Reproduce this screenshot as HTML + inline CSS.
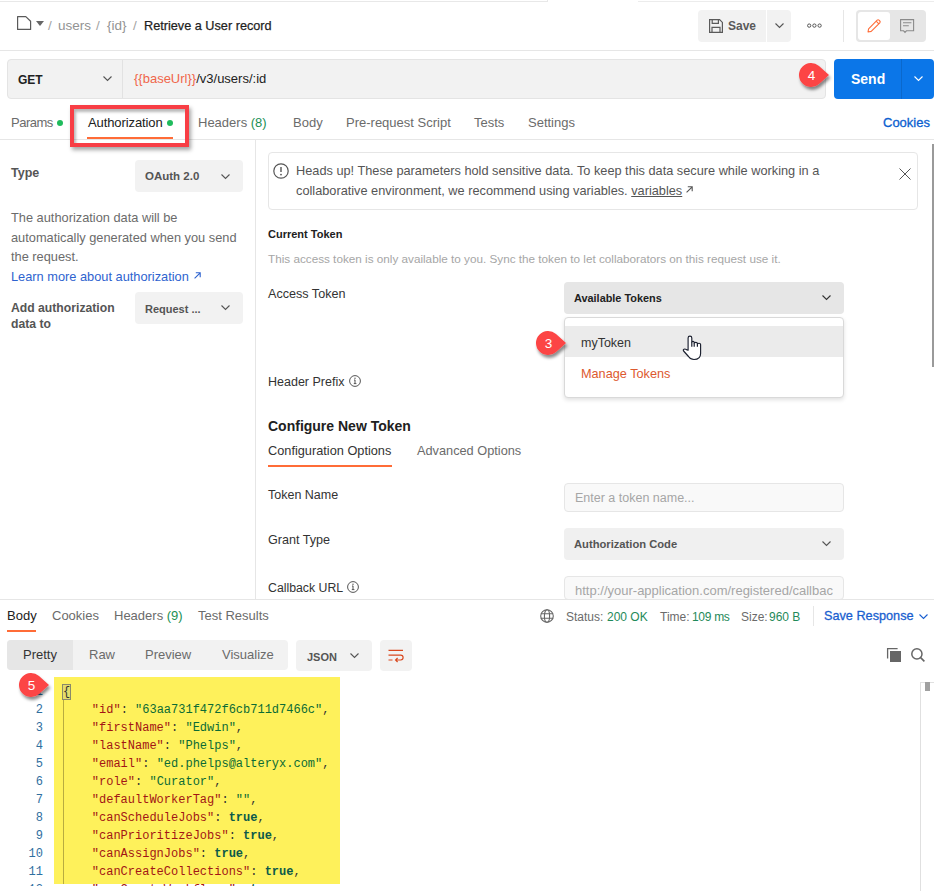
<!DOCTYPE html>
<html><head><meta charset="utf-8">
<style>
*{box-sizing:border-box;margin:0;padding:0}
html,body{width:934px;height:891px;overflow:hidden;background:#fff}
body{font-family:"Liberation Sans",sans-serif;font-size:13px;color:#212121;position:relative}
.a{position:absolute;white-space:nowrap;line-height:16px}
.b{position:absolute}
.sel{position:absolute;background:#f2f2f2;border-radius:4px}
.mono{font-family:"Liberation Mono",monospace}
svg{position:absolute;overflow:visible}
.tab{color:#6b6b6b}
.lbl{color:#212121}
.code{position:absolute;left:0;font-family:"Liberation Mono",monospace;font-size:12px;line-height:18px;white-space:pre}
.ln{color:#2f6f9f;position:absolute;width:43px;text-align:right}
.k{color:#a31515}
.s{color:#0b6b35}
.t{color:#0c5a4a;font-weight:bold}
.p{color:#333}
</style></head><body>

<!-- top tab lines -->
<div class="b" style="left:0;top:1px;width:548px;height:1px;background:#e8e8e8"></div>
<div class="b" style="left:547px;top:0;width:1px;height:2px;background:#e8e8e8"></div>
<div class="b" style="left:638px;top:1px;width:296px;height:1px;background:#ececec"></div>

<!-- header breadcrumb -->
<svg style="left:17px;top:16px" width="15" height="14" viewBox="0 0 15 14"><path d="M0.6 0.6H8.8L13.6 5.2V13.4H0.6Z" fill="none" stroke="#5a5a5a" stroke-width="1.2" stroke-linejoin="round"/></svg>
<div class="b" style="left:36px;top:21px;width:0;height:0;border-left:4px solid transparent;border-right:4px solid transparent;border-top:5px solid #666"></div>
<div class="a" style="left:48px;top:18px;font-size:13.5px;color:#a3a3a3">/</div>
<div class="a" style="left:58px;top:18px;font-size:13.5px;color:#939393">users</div>
<div class="a" style="left:96px;top:18px;font-size:13.5px;color:#a3a3a3">/</div>
<div class="a" style="left:107px;top:18px;font-size:13.5px;color:#939393">{id}</div>
<div class="a" style="left:133px;top:18px;font-size:13.5px;color:#a3a3a3">/</div>
<div class="a" style="left:144px;top:18px;font-size:12.7px;color:#1f1f1f;-webkit-text-stroke:0.25px #1f1f1f">Retrieve a User record</div>

<!-- save -->
<div class="sel" style="left:698px;top:10px;width:68px;height:32px;border-radius:4px 0 0 4px"></div>
<div class="sel" style="left:767px;top:10px;width:24px;height:32px;border-radius:0 4px 4px 0"></div>
<svg style="left:709px;top:19px" width="14" height="14" viewBox="0 0 14 14"><path d="M0.6 0.6h10l2.8 2.8v10H0.6z M3.2 0.6v3.8h6.2V0.6 M3 13.4V8.4h8v5" fill="none" stroke="#5a5a5a" stroke-width="1.2"/></svg>
<div class="a" style="left:728px;top:18px;font-weight:bold;color:#5a5a5a;font-size:12px">Save</div>
<svg style="left:775px;top:23px" width="9" height="6" viewBox="0 0 9 6"><path d="M0.5 0.5l4 4 4-4" fill="none" stroke="#555" stroke-width="1.1"/></svg>
<svg style="left:807px;top:23px" width="16" height="6" viewBox="0 0 16 6"><circle cx="2.2" cy="2.6" r="1.65" fill="none" stroke="#555" stroke-width="1"/><circle cx="7.4" cy="2.6" r="1.65" fill="none" stroke="#555" stroke-width="1"/><circle cx="12.6" cy="2.6" r="1.65" fill="none" stroke="#555" stroke-width="1"/></svg>
<div class="b" style="left:843px;top:10px;width:1px;height:32px;background:#e6e6e6"></div>
<div class="sel" style="left:856px;top:10px;width:70px;height:32px;background:#e6e6e6"></div>
<div class="b" style="left:858px;top:12px;width:32px;height:28px;background:#fff;border-radius:3px"></div>
<svg style="left:867px;top:18px" width="15" height="15" viewBox="0 0 15 15"><path d="M1 14l0.6-3.2 8.6-8.6a1.3 1.3 0 0 1 1.8 0l0.8 0.8a1.3 1.3 0 0 1 0 1.8L4.2 13.4z M9.2 3.2l2.6 2.6" fill="none" stroke="#ff6c37" stroke-width="1.1" stroke-linejoin="round"/></svg>
<svg style="left:900px;top:19px" width="15" height="15" viewBox="0 0 15 15"><path d="M0.6 0.6h13v11.2H6.4l-1.4 1.6-1.4-1.6H0.6z M3 3.8h8.4 M3 6.8h5.8" fill="none" stroke="#8a8a8a" stroke-width="1.1"/></svg>

<div class="b" style="left:0;top:50px;width:934px;height:1px;background:#e6e6e6"></div>

<!-- URL bar -->
<div class="b" style="left:7px;top:59px;width:819px;height:40px;background:#f2f2f2;border:1px solid #e4e4e4;border-radius:4px"></div>
<div class="b" style="left:122px;top:60px;width:1px;height:38px;background:#e2e2e2"></div>
<div class="a" style="left:18px;top:72px;font-weight:bold;color:#212121;font-size:12px">GET</div>
<svg style="left:103px;top:76px" width="9" height="6" viewBox="0 0 9 6"><path d="M0.5 0.5l4 4 4-4" fill="none" stroke="#555" stroke-width="1.1"/></svg>
<div class="a" style="left:134px;top:71px;font-size:13px"><span style="color:#f0664b">{{baseUrl}}</span><span style="color:#212121">/v3/users/:id</span></div>

<div class="b" style="left:834px;top:59px;width:100px;height:40px;background:#0b76e8;border-radius:4px"></div>
<div class="b" style="left:901px;top:59px;width:1px;height:40px;background:#0a68cc"></div>
<div class="a" style="left:851px;top:71px;font-size:14px;font-weight:bold;color:#fff">Send</div>
<svg style="left:914px;top:76px" width="9" height="6" viewBox="0 0 9 6"><path d="M0.5 0.5l4 4 4-4" fill="none" stroke="#fff" stroke-width="1.1"/></svg>

<!-- tabs -->
<div class="a tab" style="left:11px;top:115px;letter-spacing:-0.5px">Params</div>
<div class="b" style="left:57px;top:120px;width:6px;height:6px;border-radius:50%;background:#1fbb5c"></div>
<div class="a lbl" style="left:88px;top:115px;letter-spacing:-0.1px">Authorization</div>
<div class="b" style="left:167px;top:120px;width:6px;height:6px;border-radius:50%;background:#1fbb5c"></div>
<div class="b" style="left:87px;top:137px;width:86px;height:2px;background:#ff6c37"></div>
<div class="a tab" style="left:198px;top:115px">Headers <span style="color:#1a8f54">(8)</span></div>
<div class="a tab" style="left:293px;top:115px">Body</div>
<div class="a tab" style="left:346px;top:115px">Pre-request Script</div>
<div class="a tab" style="left:474px;top:115px">Tests</div>
<div class="a tab" style="left:528px;top:115px">Settings</div>
<div class="a" style="left:883px;top:115px;color:#0b5fd0;-webkit-text-stroke:0.3px #0b5fd0">Cookies</div>
<div class="b" style="left:0;top:139px;width:934px;height:1px;background:#e6e6e6"></div>

<!-- red annotation box -->
<div class="b" style="left:70px;top:105px;width:119px;height:42px;border:4px solid #f83e45;box-shadow:2px 3px 4px rgba(0,0,0,0.35), inset 2px 3px 3px rgba(0,0,0,0.28)"></div>

<!-- left panel divider -->
<div class="b" style="left:255px;top:140px;width:1px;height:460px;background:#e6e6e6"></div>

<!-- left panel -->
<div class="a" style="left:11px;top:165px;font-weight:bold;color:#555;font-size:12.5px">Type</div>
<div class="sel" style="left:135px;top:160px;width:108px;height:32px"></div>
<div class="a" style="left:145px;top:168px;font-weight:bold;color:#555;font-size:11.5px">OAuth 2.0</div>
<svg style="left:221px;top:174px" width="9" height="6" viewBox="0 0 9 6"><path d="M0.5 0.5l4 4 4-4" fill="none" stroke="#555" stroke-width="1.1"/></svg>

<div class="a" style="left:11px;top:208px;color:#6b6b6b;font-size:12.8px;line-height:19.6px">The authorization data will be<br>automatically generated when you send<br>the request.</div>
<div class="a" style="left:11px;top:269px;color:#2e63cf;font-size:12.8px">Learn more about authorization</div>
<svg style="left:194px;top:272px" width="7" height="7" viewBox="0 0 7 7"><path d="M0.6 6.4l5.6-5.6 M1.8 0.8h4.4v4.4" fill="none" stroke="#2e63cf" stroke-width="1.1"/></svg>

<div class="a" style="left:11px;top:300px;font-weight:bold;color:#555;font-size:12.2px;line-height:16px">Add authorization<br>data to</div>
<div class="sel" style="left:135px;top:292px;width:108px;height:32px"></div>
<div class="a" style="left:145px;top:301px;font-weight:bold;color:#555;font-size:11px">Request ...</div>
<svg style="left:221px;top:305px" width="9" height="6" viewBox="0 0 9 6"><path d="M0.5 0.5l4 4 4-4" fill="none" stroke="#555" stroke-width="1.1"/></svg>

<!-- right panel: alert -->
<div class="b" style="left:268px;top:152px;width:650px;height:58px;border:1px solid #e6e6e6;border-radius:4px"></div>
<svg style="left:273px;top:163px" width="16" height="16" viewBox="0 0 16 16"><circle cx="8" cy="8" r="7.2" fill="none" stroke="#555" stroke-width="1.2"/><path d="M8 4v5" stroke="#555" stroke-width="1.4"/><circle cx="8" cy="11.6" r="0.9" fill="#555"/></svg>
<div class="a" style="left:296px;top:161px;color:#555;font-size:12.75px;line-height:19.6px">Heads up! These parameters hold sensitive data. To keep this data secure while working in a<br>collaborative environment, we recommend using variables. <span style="text-decoration:underline">variables</span></div>
<svg style="left:686px;top:186px" width="7" height="7" viewBox="0 0 7 7"><path d="M0.6 6.4l5.6-5.6 M1.8 0.8h4.4v4.4" fill="none" stroke="#555" stroke-width="1.1"/></svg>
<svg style="left:899px;top:168px" width="12" height="12" viewBox="0 0 12 12"><path d="M0.5 0.5l11 11 M11.5 0.5l-11 11" stroke="#555" stroke-width="1"/></svg>

<div class="a" style="left:268px;top:226px;font-weight:bold;color:#212121;font-size:11px">Current Token</div>
<div class="a" style="left:268px;top:251px;color:#a6a6a6;font-size:11.73px">This access token is only available to you. Sync the token to let collaborators on this request use it.</div>

<div class="a" style="left:268px;top:286px;color:#333;font-size:12.6px">Access Token</div>
<div class="sel" style="left:564px;top:282px;width:280px;height:32px;background:#e6e6e6"></div>
<div class="a" style="left:574px;top:290px;font-weight:bold;color:#212121;font-size:10.9px">Available Tokens</div>
<svg style="left:822px;top:295px" width="9" height="6" viewBox="0 0 9 6"><path d="M0.5 0.5l4 4 4-4" fill="none" stroke="#333" stroke-width="1.1"/></svg>

<div class="a" style="left:268px;top:374px;color:#333;font-size:12.5px">Header Prefix</div>
<svg style="left:349px;top:375px" width="12" height="12" viewBox="0 0 12 12"><circle cx="6" cy="6" r="5.4" fill="none" stroke="#555" stroke-width="1"/><path d="M6 5v3.6 M5 5h1.2 M4.8 8.6h2.6" stroke="#555" stroke-width="1"/><circle cx="6" cy="3.3" r="0.7" fill="#555"/></svg>

<div class="a" style="left:268px;top:417px;font-weight:bold;color:#212121;font-size:14px;line-height:18px">Configure New Token</div>
<div class="a" style="left:268px;top:443px;color:#333;font-size:12.75px">Configuration Options</div>
<div class="a" style="left:417px;top:443px;color:#6b6b6b;font-size:12.75px">Advanced Options</div>
<div class="b" style="left:268px;top:465px;width:124px;height:2px;background:#ff6c37"></div>

<div class="a" style="left:268px;top:487px;color:#333;font-size:12.5px">Token Name</div>
<div class="b" style="left:564px;top:483px;width:280px;height:29px;background:#f9f9f9;border:1px solid #e6e6e6;border-radius:4px"></div>
<div class="a" style="left:575px;top:490px;color:#a6a6a6;font-size:12.5px">Enter a token name...</div>

<div class="a" style="left:268px;top:532px;color:#333;font-size:12.6px">Grant Type</div>
<div class="sel" style="left:564px;top:528px;width:280px;height:32px;background:#f0f0f0"></div>
<div class="a" style="left:574px;top:536px;font-weight:bold;color:#555;font-size:11.2px">Authorization Code</div>
<svg style="left:822px;top:541px" width="9" height="6" viewBox="0 0 9 6"><path d="M0.5 0.5l4 4 4-4" fill="none" stroke="#555" stroke-width="1.1"/></svg>

<div class="a" style="left:268px;top:580px;color:#333;font-size:12.3px">Callback URL</div>
<svg style="left:347px;top:581px" width="12" height="12" viewBox="0 0 12 12"><circle cx="6" cy="6" r="5.4" fill="none" stroke="#555" stroke-width="1"/><path d="M6 5v3.6 M5 5h1.2 M4.8 8.6h2.6" stroke="#555" stroke-width="1"/><circle cx="6" cy="3.3" r="0.7" fill="#555"/></svg>
<div class="b" style="left:564px;top:576px;width:280px;height:24px;border-bottom:none;border-radius:4px 4px 0 0;background:#f9f9f9;border:1px solid #e6e6e6;border-radius:4px;overflow:hidden"></div>
<div class="b" style="left:575px;top:579px;width:258px;height:20px;overflow:hidden"><div class="a" style="left:0;top:4px;color:#a6a6a6;font-size:13px">http://your-application.com/registered/callback</div></div>

<!-- right scrollbar -->
<div class="b" style="left:932px;top:144px;width:2px;height:223px;background:#9a9a9a"></div>

<!-- dropdown menu -->
<div class="b" style="left:564px;top:317px;width:280px;height:81px;background:#fff;border:1px solid #d9d9d9;border-radius:4px;box-shadow:0 2px 4px rgba(0,0,0,0.12)"></div>
<div class="b" style="left:565px;top:326px;width:278px;height:31px;background:#ebebeb"></div>
<div class="a" style="left:581px;top:335px;color:#333;font-size:12.5px">myToken</div>
<div class="a" style="left:581px;top:366px;color:#dd5a2f;font-size:12.7px">Manage Tokens</div>


<!-- callouts -->


<!-- response divider -->
<div class="b" style="left:0;top:599px;width:934px;height:1px;background:#e6e6e6"></div>

<!-- response tabs -->
<div class="a lbl" style="left:7px;top:608px">Body</div>
<div class="b" style="left:7px;top:630px;width:29px;height:2px;background:#ff6c37"></div>
<div class="a tab" style="left:52px;top:608px">Cookies</div>
<div class="a tab" style="left:114px;top:608px">Headers <span style="color:#1a8f54">(9)</span></div>
<div class="a tab" style="left:198px;top:608px">Test Results</div>

<svg style="left:540px;top:609px" width="14" height="14" viewBox="0 0 14 14"><circle cx="7" cy="7" r="6.3" fill="none" stroke="#666" stroke-width="1.1"/><ellipse cx="7" cy="7" rx="2.6" ry="6.3" fill="none" stroke="#666" stroke-width="1.1"/><path d="M0.8 4.8h12.4 M0.8 9.2h12.4" stroke="#666" stroke-width="1.1"/></svg>
<div class="a" style="left:566px;top:609px;font-size:12px;color:#6b6b6b">Status:</div>
<div class="a" style="left:607px;top:609px;font-size:12px;color:#1f8a5a">200 OK</div>
<div class="a" style="left:660px;top:609px;font-size:12px;color:#6b6b6b">Time:</div>
<div class="a" style="left:692px;top:609px;font-size:12px;color:#1f8a5a;letter-spacing:-0.3px">109 ms</div>
<div class="a" style="left:741px;top:609px;font-size:12px;color:#6b6b6b">Size:</div>
<div class="a" style="left:769px;top:609px;font-size:12px;color:#1f8a5a">960 B</div>
<div class="b" style="left:813px;top:606px;width:1px;height:20px;background:#e6e6e6"></div>
<div class="a" style="left:824px;top:608px;color:#1a5fd0;font-size:12.7px;-webkit-text-stroke:0.3px #1a5fd0">Save Response</div>
<svg style="left:919px;top:614px" width="9" height="6" viewBox="0 0 9 6"><path d="M0.5 0.5l4 4 4-4" fill="none" stroke="#1a5fd0" stroke-width="1.1"/></svg>

<!-- segmented -->
<div class="sel" style="left:7px;top:640px;width:281px;height:30px;background:#f2f2f2"></div>
<div class="b" style="left:7px;top:640px;width:66px;height:30px;background:#e6e6e6;border-radius:4px 0 0 4px"></div>
<div class="a" style="left:23px;top:647px;color:#333">Pretty</div>
<div class="a tab" style="left:89px;top:647px">Raw</div>
<div class="a tab" style="left:145px;top:647px">Preview</div>
<div class="a tab" style="left:222px;top:647px">Visualize</div>

<div class="sel" style="left:296px;top:640px;width:76px;height:31px"></div>
<div class="a" style="left:307px;top:649px;font-weight:bold;color:#555;font-size:11px">JSON</div>
<svg style="left:350px;top:653px" width="9" height="6" viewBox="0 0 9 6"><path d="M0.5 0.5l4 4 4-4" fill="none" stroke="#555" stroke-width="1.1"/></svg>
<div class="sel" style="left:380px;top:640px;width:32px;height:31px"></div>
<svg style="left:388px;top:649px" width="16" height="14" viewBox="0 0 16 14"><path d="M0.5 1.4h14.5 M0.5 6.2h12.2a2.4 2.4 0 0 1 0 4.8H8 M0.5 11h4 M9.6 9l-2 2 2 2" fill="none" stroke="#d9481f" stroke-width="1.2"/></svg>

<svg style="left:887px;top:648px" width="15" height="15" viewBox="0 0 15 15"><path d="M0.6 10.6V0.6h10" fill="none" stroke="#666" stroke-width="1.3"/><rect x="3" y="3" width="11" height="11" fill="#666"/></svg>
<svg style="left:911px;top:648px" width="15" height="15" viewBox="0 0 15 15"><circle cx="5.9" cy="5.9" r="5.1" fill="none" stroke="#666" stroke-width="1.5"/><path d="M9.6 9.6l3.8 3.8" stroke="#666" stroke-width="1.6"/></svg>

<!-- code scrollbar -->
<div class="b" style="left:920px;top:682px;width:1px;height:209px;background:#e0e0e0"></div>
<div class="b" style="left:920px;top:682px;width:14px;height:1px;background:#e0e0e0"></div>
<div class="b" style="left:925px;top:682px;width:5px;height:9px;background:#a0a0a0"></div>

<!-- yellow highlight -->
<div class="b" style="left:54px;top:677px;width:286px;height:207px;background:#fef15b"></div>
<div class="b" style="left:63px;top:699px;width:1px;height:185px;background:#b8ac40"></div>

<!-- code -->
<div class="b" style="left:0;top:683px;width:934px;height:203px;overflow:hidden">
<div class="ln mono" style="top:0;font-size:12px;line-height:18px">1<br>2<br>3<br>4<br>5<br>6<br>7<br>8<br>9<br>10<br>11<br>12</div>
<div class="code" style="left:63px;top:0"><span class="p" style="outline:1px solid #8a8a6a;background:#e4dc6a">{</span>
    <span class="k">"id"</span><span class="p">: </span><span class="s">"63aa731f472f6cb711d7466c"</span><span class="p">,</span>
    <span class="k">"firstName"</span><span class="p">: </span><span class="s">"Edwin"</span><span class="p">,</span>
    <span class="k">"lastName"</span><span class="p">: </span><span class="s">"Phelps"</span><span class="p">,</span>
    <span class="k">"email"</span><span class="p">: </span><span class="s">"ed.phelps@alteryx.com"</span><span class="p">,</span>
    <span class="k">"role"</span><span class="p">: </span><span class="s">"Curator"</span><span class="p">,</span>
    <span class="k">"defaultWorkerTag"</span><span class="p">: </span><span class="s">""</span><span class="p">,</span>
    <span class="k">"canScheduleJobs"</span><span class="p">: </span><span class="t">true</span><span class="p">,</span>
    <span class="k">"canPrioritizeJobs"</span><span class="p">: </span><span class="t">true</span><span class="p">,</span>
    <span class="k">"canAssignJobs"</span><span class="p">: </span><span class="t">true</span><span class="p">,</span>
    <span class="k">"canCreateCollections"</span><span class="p">: </span><span class="t">true</span><span class="p">,</span>
    <span class="k">"canCreateWorkflows"</span><span class="p">: </span><span class="t">true</span><span class="p">,</span></div>
</div>


<svg style="left:682px;top:335px" width="22" height="27" viewBox="0 0 22 27"><path d="M6.1 15.2L6.1 2.9Q6.1 1.1 7.95 1.1Q9.8 1.1 9.8 2.9L9.8 7.3Q9.8 6.3 11 6.3Q12.2 6.3 12.2 7.5L12.2 8.3Q12.2 7.3 13.8 7.3Q15.4 7.3 15.4 8.5L15.4 9.3Q15.4 8.2 17 8.2Q18.6 8.2 18.6 9.6L18.6 18.5Q18.6 24.5 12 24.5Q8.5 24.5 6.5 21.5L1.6 16Q0.8 14.8 2 14.2Q3.2 13.7 4.4 14.6Z" fill="#fff" stroke="#1a1f2e" stroke-width="1.15" stroke-linejoin="round"/><path d="M9.8 7.3V11.8M12.2 8.3V11.8M15.4 9.3V11.8" stroke="#1a1f2e" stroke-width="1.2"/></svg>
<svg style="left:533.5px;top:328.5px" width="40" height="34" viewBox="0 0 40 34"><path d="M32 14 L22 22.94 A12 12 0 1 1 22 5.06 Z" fill="#fc4444" filter="url(#sh)"/><text x="14.4" y="18.9" font-family="Liberation Sans" font-size="13.5" fill="#fff" text-anchor="middle">3</text></svg>
<svg style="left:797.2px;top:61.3px" width="40" height="34" viewBox="0 0 40 34"><path d="M32 14 L22 22.94 A12 12 0 1 1 22 5.06 Z" fill="#fc4444" filter="url(#sh)"/><text x="14.4" y="18.9" font-family="Liberation Sans" font-size="13.5" fill="#fff" text-anchor="middle">4</text></svg>
<svg style="left:17.3px;top:671.3px" width="40" height="34" viewBox="0 0 40 34"><path d="M32 14 L22 22.94 A12 12 0 1 1 22 5.06 Z" fill="#fc4444" filter="url(#sh)"/><text x="14.4" y="18.9" font-family="Liberation Sans" font-size="13.5" fill="#fff" text-anchor="middle">5</text></svg>
<svg style="left:0;top:0" width="0" height="0"><defs><filter id="sh" x="-40%" y="-40%" width="180%" height="190%"><feDropShadow dx="1.5" dy="3" stdDeviation="1.6" flood-color="#000" flood-opacity="0.45"/></filter></defs></svg>
</body></html>
